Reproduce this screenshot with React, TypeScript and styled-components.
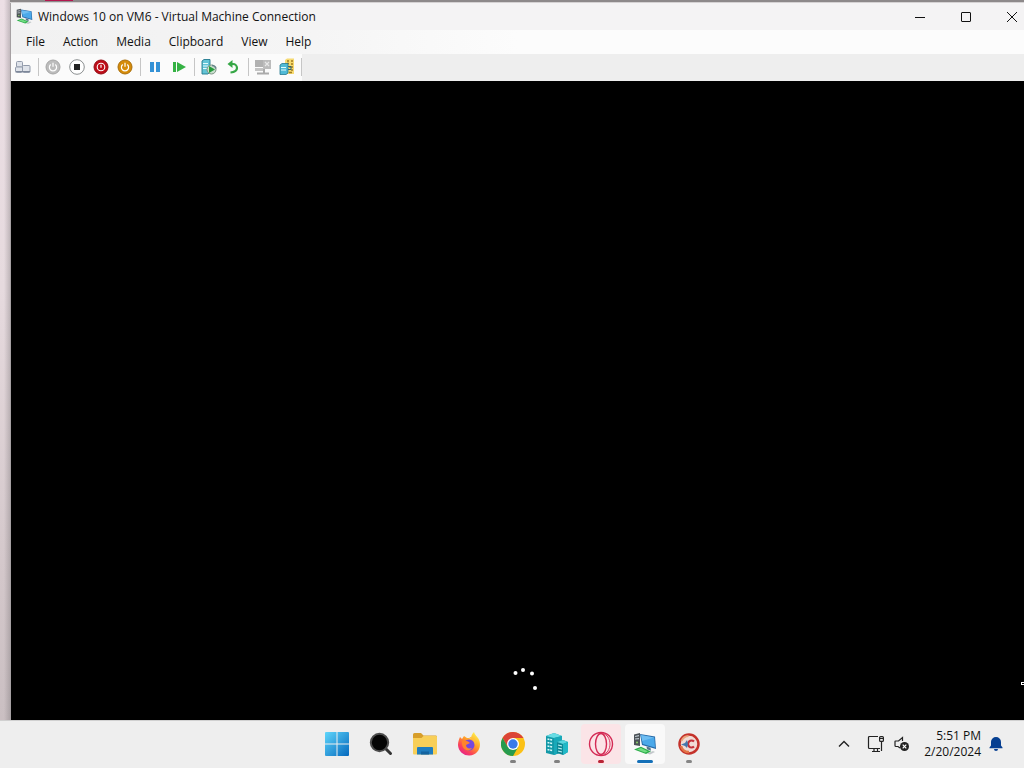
import React from "react";
import styled, { createGlobalStyle } from "styled-components";

const GlobalStyle = createGlobalStyle`
  *, *::before, *::after { box-sizing: border-box; }
  body {
    margin: 0;
    font-family: "Segoe UI", "Open Sans", "Noto Sans", sans-serif;
    font-size: 12px;
    color: #111;
  }
  button { font: inherit; color: inherit; border: 0; padding: 0; background: transparent; }
`;

const Screen = styled.div`
  display: flex;
  flex-direction: column;
  min-height: 100vh;
  background: #ededed;
`;

const Desktop = styled.main`
  flex: 1;
  display: flex;
  flex-direction: column;
  padding-left: 10px;
  overflow: hidden;
  background:
    linear-gradient(90deg, rgba(120, 115, 118, 0) 0, rgba(120, 115, 118, 0) 4px, rgba(120, 115, 118, 0.35) 10px),
    linear-gradient(180deg, #ecdfe5 0%, #e6dade 40%, #d3c7ca 80%, #cabfc2 100%);
`;

const BackdropEdge = styled.div`
  display: flex;
  height: 3px;
  padding-left: 35px;
  background: #8d898a;
  border-bottom: 1px solid #d5d2d3;
`;

const BackdropTab = styled.span`
  width: 28px;
  height: 1px;
  background: #b3174f;
`;

const VmWindow = styled.section`
  flex: 1;
  display: flex;
  flex-direction: column;
  border-left: 1px solid #a6a1a3;
  background: #000;
`;

const TitleBar = styled.header`
  display: flex;
  align-items: center;
  height: 27px;
  padding-left: 5px;
  background: #f4f3f4;
`;

const Title = styled.h1`
  flex: 1;
  margin: 0 0 0 5px;
  font-size: 12px;
  font-weight: 400;
  line-height: 16px;
  white-space: nowrap;
`;

const WindowControls = styled.div`
  display: flex;
  margin-right: -11px;
`;

const ControlButton = styled.button`
  display: grid;
  place-items: center;
  width: 46px;
  height: 27px;
`;

const MenuBar = styled.nav`
  display: flex;
  align-items: center;
  height: 24px;
  padding-left: 6px;
  background: linear-gradient(90deg, #f1f1f1 0%, #f5f5f5 30%, #fcfcfc 50%);
`;

const MenuButton = styled.button`
  padding: 0 9px;
  line-height: 24px;
`;

const ToolArea = styled.div`
  display: flex;
  height: 27px;
  background: #eeeeee;
`;

const ToolStrip = styled.div`
  display: flex;
  align-items: center;
  padding-bottom: 1px;
  background: #fbfbfb;
`;

const ToolButton = styled.button`
  display: grid;
  place-items: center;
  width: 24px;
  height: 24px;
`;

const Separator = styled.span`
  width: 1px;
  height: 18px;
  margin: 0 2px 0 3px;
  background: #c6c6c6;

  &:last-child {
    margin: 0 0 0 2px;
  }
`;

const Guest = styled.div`
  position: relative;
  flex: 1;
  min-height: 200px;
  display: flex;
  flex-direction: column;
  align-items: center;
  justify-content: flex-end;
  padding-bottom: 28px;
  background: #000;
`;

const GuestCursor = styled.svg`
  position: absolute;
  right: 0;
  bottom: 35px;
`;

const Taskbar = styled.footer`
  display: grid;
  grid-template-columns: 1fr auto 1fr;
  align-items: center;
  height: 48px;
  padding-bottom: 2px;
  border-top: 1px solid #d0d0d0;
  background: #eeeeee;
`;

const AppList = styled.div`
  grid-column: 2;
  display: flex;
  padding-left: 2px;
`;

const AppButton = styled.button<{ $tint?: string }>`
  position: relative;
  display: grid;
  place-items: center;
  width: 40px;
  height: 40px;
  margin: 0 2px;
  border-radius: 4px;
  background: ${(p) => p.$tint ?? "transparent"};
`;

const Indicator = styled.span<{ $color: string; $wide?: boolean }>`
  position: absolute;
  bottom: 1px;
  left: 50%;
  width: ${(p) => (p.$wide ? 16 : 6)}px;
  height: 3px;
  border-radius: 2px;
  transform: translateX(-50%);
  background: ${(p) => p.$color};
`;

const Tray = styled.div`
  display: flex;
  align-items: center;
  justify-content: flex-end;
  padding-right: 20px;
`;

const TrayButton = styled.button<{ $width: number }>`
  display: grid;
  place-items: center;
  width: ${(p) => p.$width}px;
  height: 32px;
`;

const Clock = styled.button`
  margin: 0 7px 0 12px;
  line-height: 16px;
  text-align: right;
  white-space: nowrap;
`;

const ClockLine = styled.span`
  display: block;
`;

const VmIcon = ({ size }: { size: number }) => (
  <svg width={size} height={size} viewBox="0 0 24 24" aria-hidden="true">
    <path d="M1 2.500l6-1.500v13l-6-1z" fill="#4b5257" />
    <path d="M2 4.500l4-.8M2 7l4-.4" stroke="#c0cad0" strokeWidth="1.200" />
    <circle cx="4" cy="10.500" r="1" fill="#8ed267" />
    <path d="M7 2l15 2.500 1 12.500L9 13z" fill="#276aa8" />
    <path d="M8 3l13.300 2.400.7 10L9.800 12z" fill="#4ba9ea" />
    <path d="M8 3l13.300 2.400L9 9z" fill="#86cbf6" opacity=".6" />
    <path d="M13.500 14.500l4 1.200.5 3-4-1.500z" fill="#56758b" />
    <path d="M1 17.500l7-2.700 10 4.700-5 2.500z" fill="#2fae4c" />
    <path d="M4 17.500l4-1.500 7 3.400-3 1.200z" fill="#72dc83" />
    <path d="M14 21.500l6-2.500 2 1-5 2.500z" fill="#c3c8cb" />
  </svg>
);

const KeysIcon = () => (
  <svg width="16" height="14" viewBox="0 0 16 14" fill="#dfe3ea" stroke="#929bab">
    <rect x="1.500" y="1.500" width="6" height="5.500" rx="1" />
    <rect x=".5" y="7" width="7" height="5.500" rx="1" />
    <rect x="7.500" y="5.500" width="7.500" height="7" rx="1" />
    <path d="M1 11.500h14" stroke="#7d8799" />
  </svg>
);

const PowerIcon = ({ fill, rim, alert }: { fill: string; rim: string; alert?: boolean }) => (
  <svg width="16" height="16" viewBox="0 0 16 16" fill="none">
    <circle cx="8" cy="8" r="7" fill={fill} stroke={rim} />
    {alert ? (
      <>
        <circle cx="8" cy="8" r="3.800" stroke="#fff" strokeWidth="1.100" />
        <path d="M8 5.800v3" stroke="#fff" strokeWidth="1.200" />
      </>
    ) : (
      <path d="M5.700 5.500a3.600 3.600 0 1 0 4.600 0M8 3.800v4" stroke="#fff" strokeWidth="1.200" />
    )}
  </svg>
);

const StopIcon = () => (
  <svg width="16" height="16" viewBox="0 0 16 16">
    <circle cx="8" cy="8" r="7.300" fill="#fff" stroke="#8b8f90" />
    <rect x="5" y="5" width="6" height="6" fill="#222" />
  </svg>
);

const PauseIcon = () => (
  <svg width="12" height="12" viewBox="0 0 12 12" fill="#3592d6">
    <rect x="1" y="1" width="4" height="10" />
    <rect x="7" y="1" width="4" height="10" />
  </svg>
);

const ResumeIcon = () => (
  <svg width="14" height="12" viewBox="0 0 14 12" fill="#35b244">
    <rect x="1" y="1" width="3" height="10" />
    <path d="M5 1l9 5-9 5z" />
  </svg>
);

const CheckpointIcon = () => (
  <svg width="16" height="16" viewBox="0 0 16 16">
    <path d="M1 2l2-1.500h6V13l-2 2H1z" fill="#63c4d6" stroke="#23788d" strokeWidth=".9" />
    <path d="M2 4.500h5M2 7h5M2 9.500h4" stroke="#e2fbff" />
    <circle cx="10.500" cy="10.500" r="4.500" fill="#c9dfcd" stroke="#7d9284" />
    <path d="M8 7l6 3.500L8 14z" fill="#259b3c" />
    <path d="M11 6.500c2 0 3.500 1 4 3" fill="none" stroke="#68848b" strokeWidth="1.500" />
  </svg>
);

const RevertIcon = () => (
  <svg width="14" height="14" viewBox="0 0 14 14" fill="none">
    <path d="M4.500 4h2.500a4 4 0 0 1 4 4c0 2.500-2 4-6.500 4.500" stroke="#36a746" strokeWidth="2.200" />
    <path d="M6.500 0v8L1.500 4z" fill="#36a746" />
  </svg>
);

const SessionIcon = () => (
  <svg width="18" height="16" viewBox="0 0 18 16">
    <path d="M1 1h9v7H1z" fill="#b1b1b1" />
    <path d="M9 1h8v9H9z" fill="#bcbcbc" />
    <path d="M11 3l4 4M15 3l-4 4" stroke="#e8e8e8" strokeWidth="1.200" />
    <path d="M1 9h9v3H1z" fill="#c4c4c4" />
    <path d="M3 14.500h12M10 10v4" stroke="#ababab" strokeWidth="2" />
  </svg>
);

const ShareIcon = () => (
  <svg width="16" height="18" viewBox="0 0 16 18">
    <path d="M6 2l2-1.500h7V16H6z" fill="#f6da72" />
    <path d="M8 3h2M12 3h2M8 5.500h2M12 6h2M10 9h4M12 12h2M10 14.500h3" stroke="#a17c22" strokeWidth="1.300" />
    <path d="M1 7l2-1.500h6V15l-2 1.500H1z" fill="#50bad6" stroke="#237991" strokeWidth=".8" />
    <path d="M2 9.500h5M2 12h5" stroke="#e2fbff" />
    <path d="M9 8.500h3v3H9" fill="none" stroke="#2b667d" />
  </svg>
);

const MinimizeIcon = () => (
  <svg width="10" height="10" viewBox="0 0 10 10" stroke="#111"><path d="M0 5.500h10" /></svg>
);
const MaximizeIcon = () => (
  <svg width="10" height="10" viewBox="0 0 10 10" fill="none" stroke="#111">
    <rect x=".5" y=".5" width="9" height="9" rx=".5" />
  </svg>
);
const CloseIcon = () => (
  <svg width="10" height="10" viewBox="0 0 10 10" stroke="#111"><path d="M0 0l10 10M10 0L0 10" /></svg>
);

const Spinner = () => (
  <svg width="40" height="28" viewBox="0 0 40 28" fill="#fff" role="img" aria-label="Loading">
    <circle cx="17.500" cy="9" r="2" />
    <circle cx="25" cy="6" r="2" />
    <circle cx="34" cy="9.500" r="2" />
    <circle cx="37" cy="24" r="2" />
  </svg>
);

const StartIcon = () => (
  <svg width="24" height="24" viewBox="0 0 24 24">
    <defs>
      <linearGradient id="start" x1="0" y1="0" x2="24" y2="24" gradientUnits="userSpaceOnUse">
        <stop offset="0" stopColor="#5fd6fb" />
        <stop offset="1" stopColor="#0568bd" />
      </linearGradient>
    </defs>
    <path d="M1 0h10.500v11.500H0V1a1 1 0 0 1 1-1zM12.500 0H23a1 1 0 0 1 1 1v10.500H12.500zM0 12.500h11.500V24H1a1 1 0 0 1-1-1zM12.500 12.500H24V23a1 1 0 0 1-1 1H12.500z" fill="url(#start)" />
  </svg>
);

const SearchIcon = () => (
  <svg width="24" height="24" viewBox="0 0 24 24">
    <path d="M16 16l5.500 5.500" stroke="#333" strokeWidth="3" strokeLinecap="round" />
    <circle cx="10.500" cy="10.500" r="8.700" fill="#050505" stroke="#4d4d4d" strokeWidth="2" />
  </svg>
);

const FolderIcon = () => (
  <svg width="26" height="24" viewBox="0 0 26 24">
    <path d="M1 2.500A1.500 1.500 0 0 1 2.500 1H9l2.500 2.500H24A1.500 1.500 0 0 1 25 5v6H1z" fill="#d79e2b" />
    <path d="M1 6h8.500l2-2H24a1 1 0 0 1 1 1v16.500a1 1 0 0 1-1 1H2a1 1 0 0 1-1-1z" fill="#f8cf58" />
    <path d="M5 22.500V16a1 1 0 0 1 1-1h14a1 1 0 0 1 1 1v6.500z" fill="#1f7dbf" />
    <path d="M9 22.500v-3h8v3z" fill="#14639f" />
  </svg>
);

const FirefoxIcon = () => (
  <svg width="24" height="24" viewBox="0 0 24 24">
    <defs>
      <linearGradient id="fox" x1="20" y1="2" x2="5" y2="22" gradientUnits="userSpaceOnUse">
        <stop offset="0" stopColor="#fff04a" />
        <stop offset=".45" stopColor="#ff9829" />
        <stop offset=".75" stopColor="#fb4556" />
        <stop offset="1" stopColor="#e5228d" />
      </linearGradient>
    </defs>
    <path d="M3 5l2 2 2-3 3 2c2 0 3 0 4 1 0-3 1-5 3-7 1 4 6 6 6 12a11 11 0 0 1-22 1c0-3 1-6 2-8z" fill="url(#fox)" />
    <circle cx="12" cy="13" r="5.500" fill="#7548df" />
    <path d="M5 9c3-1 6 0 8 2l-4 2c0 3 3 4 6 3-3 5-11 2-10-7z" fill="#ff842b" />
    <path d="M12 7c3-1 6 2 6 6 2-4-1-8-5-8z" fill="#ffc13a" />
  </svg>
);

const ChromeIcon = () => (
  <svg width="24" height="24" viewBox="0 0 24 24">
    <circle cx="12" cy="12" r="12" fill="#fbc116" />
    <path d="M1.600 6A12 12 0 0 1 22.400 6H12L6.800 15z" fill="#db4437" />
    <path d="M1.600 6A12 12 0 0 0 12 24l5.200-9H6.800z" fill="#279b4e" />
    <circle cx="12" cy="12" r="6" fill="#fff" />
    <circle cx="12" cy="12" r="4.700" fill="#3979e8" />
  </svg>
);

const ServersIcon = () => (
  <svg width="24" height="24" viewBox="0 0 24 24">
    <path d="M1 4l8-3 8 3v16l-8 3-8-2z" fill="#1398a7" />
    <path d="M1 4l8-3 8 3-8 2z" fill="#67dce4" />
    <path d="M9 6l8-2v16l-8 3z" fill="#18a9b9" />
    <path d="M2.500 7l5 1M2.500 10.500l5 1M2.500 14l5 1M2.500 17.500l5 1" stroke="#d8fafa" strokeWidth="1.500" strokeDasharray="2 .7" />
    <path d="M12 10l6-2 5 2v10l-5 3-6-2z" fill="#0d8795" />
    <path d="M12 10l6-2 5 2-5 2z" fill="#58d6df" />
    <path d="M18 12l5-2v10l-5 3z" fill="#20b8c6" />
    <path d="M13 13l4 1M13 16l4 1M13 19l4 1" stroke="#bdf3f5" strokeWidth="1.200" />
  </svg>
);

const OperaIcon = () => (
  <svg width="26" height="26" viewBox="0 0 26 26" fill="none" stroke="#d42b55" strokeWidth="1.400">
    <circle cx="13" cy="13" r="11.500" />
    <ellipse cx="13" cy="13" rx="5.500" ry="10.500" />
    <path d="M15 3c4 0 7 5 7 10s-3 10-7 10" strokeWidth=".9" />
  </svg>
);

const RecorderIcon = () => (
  <svg width="22" height="22" viewBox="0 0 22 22">
    <circle cx="11" cy="11" r="9.500" fill="#f1dcd6" stroke="#c4322b" strokeWidth="2.500" />
    <path d="M3.500 8a8 8 0 0 1 7-5" fill="none" stroke="#e9a37c" strokeWidth="2" />
    <path d="M3 13a8 8 0 0 0 8 6" fill="none" stroke="#e37446" strokeWidth="2.500" />
    <path d="M16 8.500a3.500 3.500 0 1 0 0 5" fill="none" stroke="#c4313a" strokeWidth="2.200" />
    <path d="M3 11.500l4-1.500 2-3 1 4-1 4-2-2z" fill="#4577ad" />
  </svg>
);

const ChevronIcon = () => (
  <svg width="12" height="8" viewBox="0 0 12 8" fill="none" stroke="#222" strokeWidth="1.400"><path d="M1 6.500l5-5 5 5" /></svg>
);

const NetworkIcon = () => (
  <svg width="18" height="18" viewBox="0 0 18 18" fill="none" stroke="#222" strokeWidth="1.200">
    <path d="M11 1.500H2.500a1 1 0 0 0-1 1v10a1 1 0 0 0 1 1H13M5 16.500h8M7 13.500v3M10.500 13.500v3" />
    <rect x="12.600" y="1.600" width="3.800" height="4.800" rx="1" />
    <path d="M14.500 6.500v9.500M13 3.500h3" />
  </svg>
);

const MutedIcon = () => (
  <svg width="16" height="16" viewBox="0 0 16 16" fill="none" stroke="#222" strokeWidth="1.200">
    <path d="M8.500 5V1.500L4.500 5h-3a.5.5 0 0 0-.5.5v4a1 1 0 0 0 1 1h2L6 12" />
    <circle cx="10.500" cy="10.500" r="4.500" fill="#222" stroke="none" />
    <path d="M8.700 8.700l3.600 3.600M12.300 8.700l-3.600 3.600" stroke="#fff" />
  </svg>
);

const BellIcon = () => (
  <svg width="16" height="16" viewBox="0 0 16 16" fill="#063f91">
    <path d="M8 1a5 5 0 0 1 5 5v3.500l1.500 2v.7h-13v-.7L3 9.500V6a5 5 0 0 1 5-5zM6 13h4a2 2 0 0 1-4 0z" />
  </svg>
);

type Tool = { label: string; icon: React.ReactNode };

const toolGroups: Tool[][] = [
  [{ label: "Ctrl+Alt+Delete", icon: <KeysIcon /> }],
  [
    { label: "Start", icon: <PowerIcon fill="#bcbcbc" rim="#a6a6a6" /> },
    { label: "Turn Off", icon: <StopIcon /> },
    { label: "Shut Down", icon: <PowerIcon fill="#bd0c18" rim="#930c14" alert /> },
    { label: "Save", icon: <PowerIcon fill="#d58b08" rim="#a96e0b" /> },
  ],
  [
    { label: "Pause", icon: <PauseIcon /> },
    { label: "Reset", icon: <ResumeIcon /> },
  ],
  [
    { label: "Checkpoint", icon: <CheckpointIcon /> },
    { label: "Revert", icon: <RevertIcon /> },
  ],
  [
    { label: "Enhanced Session", icon: <SessionIcon /> },
    { label: "Share", icon: <ShareIcon /> },
  ],
];

type TaskApp = Tool & { tint?: string; indicator?: string; active?: boolean };

const taskApps: TaskApp[] = [
  { label: "Start menu", icon: <StartIcon /> },
  { label: "Search", icon: <SearchIcon /> },
  { label: "File Explorer", icon: <FolderIcon /> },
  { label: "Firefox", icon: <FirefoxIcon /> },
  { label: "Chrome", icon: <ChromeIcon />, indicator: "#808080" },
  { label: "Hyper-V Manager", icon: <ServersIcon />, indicator: "#808080" },
  { label: "Opera", icon: <OperaIcon />, tint: "#fbe4e7", indicator: "#b92435" },
  { label: "Virtual Machine Connection", icon: <VmIcon size={24} />, tint: "#f9f9f9", indicator: "#1470b8", active: true },
  { label: "Recorder", icon: <RecorderIcon />, indicator: "#858585" },
];

const menus = ["File", "Action", "Media", "Clipboard", "View", "Help"];

export default function App() {
  return (
    <Screen>
      <GlobalStyle />
      <Desktop>
        <BackdropEdge><BackdropTab /></BackdropEdge>
        <VmWindow>
          <TitleBar>
            <VmIcon size={17} />
            <Title>Windows 10 on VM6 - Virtual Machine Connection</Title>
            <WindowControls>
              <ControlButton aria-label="Minimize"><MinimizeIcon /></ControlButton>
              <ControlButton aria-label="Maximize"><MaximizeIcon /></ControlButton>
              <ControlButton aria-label="Close"><CloseIcon /></ControlButton>
            </WindowControls>
          </TitleBar>
          <MenuBar>
            {menus.map((menu) => <MenuButton key={menu}>{menu}</MenuButton>)}
          </MenuBar>
          <ToolArea>
            <ToolStrip role="toolbar">
              {toolGroups.map((group, index) => (
                <React.Fragment key={index}>
                  {group.map((tool) => (
                    <ToolButton key={tool.label} aria-label={tool.label}>{tool.icon}</ToolButton>
                  ))}
                  <Separator />
                </React.Fragment>
              ))}
            </ToolStrip>
          </ToolArea>
          <Guest>
            <Spinner />
            <GuestCursor width="3" height="3" viewBox="0 0 3 3" aria-hidden="true">
              <path d="M0 0h3v1H1v1h2v1H0z" fill="#fff" />
            </GuestCursor>
          </Guest>
        </VmWindow>
      </Desktop>
      <Taskbar>
        <AppList>
          {taskApps.map((app) => (
            <AppButton key={app.label} aria-label={app.label} $tint={app.tint}>
              {app.icon}
              {app.indicator && <Indicator $color={app.indicator} $wide={app.active} />}
            </AppButton>
          ))}
        </AppList>
        <Tray>
          <TrayButton $width={32} aria-label="Show hidden icons"><ChevronIcon /></TrayButton>
          <TrayButton $width={32} aria-label="Network"><NetworkIcon /></TrayButton>
          <TrayButton $width={20} aria-label="Volume muted"><MutedIcon /></TrayButton>
          <Clock>
            <ClockLine>5:51 PM</ClockLine>
            <ClockLine>2/20/2024</ClockLine>
          </Clock>
          <TrayButton $width={16} aria-label="Notifications"><BellIcon /></TrayButton>
        </Tray>
      </Taskbar>
    </Screen>
  );
}
